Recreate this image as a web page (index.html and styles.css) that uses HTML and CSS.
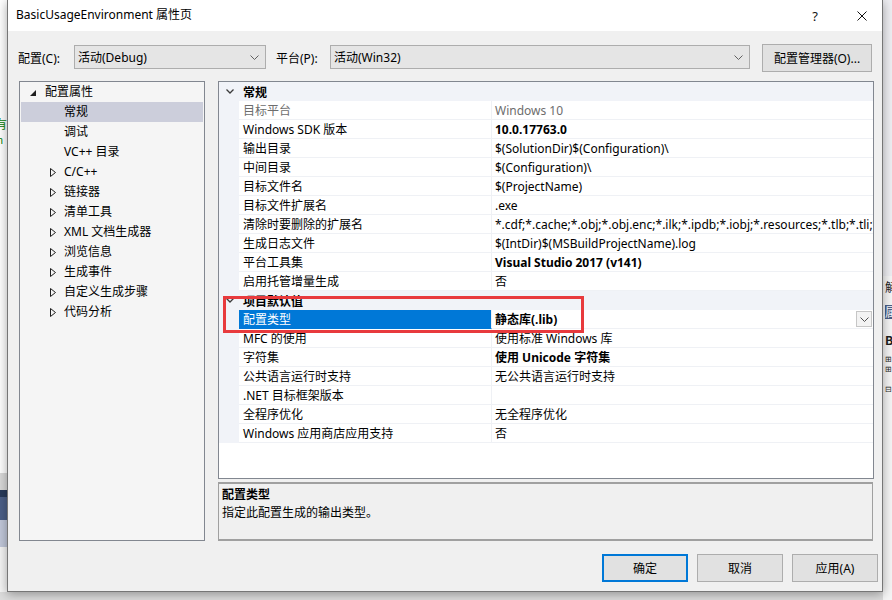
FILE: index.html
```html
<!DOCTYPE html>
<html lang="zh-CN">
<head>
<meta charset="utf-8">
<title>BasicUsageEnvironment 属性页</title>
<link rel="stylesheet" href="styles.css">
</head>
<body>
<div class="ide-left">
  <div class="ide-left-code">
    <span class="code-frag c1">有</span>
    <span class="code-frag c2">n</span>
  </div>
  <div class="ide-left-bars">
    <div class="bar b-gray"></div>
    <div class="bar b-navy"></div>
    <div class="bar b-blue"></div>
    <div class="bar b-light"></div>
  </div>
</div>
<div class="ide-right">
  <div class="ide-right-top"></div>
  <div class="ide-right-panel">
    <span class="rp rp1">解</span>
    <span class="rp rp2">属</span>
    <span class="rp rp3">B</span>
    <span class="rp rp4">⊞</span>
    <span class="rp rp5">⊞</span>
    <span class="rp rp6">⊟</span>
  </div>
</div>

<div class="dialog">
  <div class="titlebar">
    <span class="title">BasicUsageEnvironment 属性页</span>
    <span class="help">?</span>
    <svg class="close" width="10" height="10" viewBox="0 0 10 10"><path d="M0.5 0.5 L9.5 9.5 M9.5 0.5 L0.5 9.5" stroke="#111" stroke-width="1" fill="none"/></svg>
  </div>

  <div class="config-row">
    <span class="lbl lbl-config">配置(C):</span>
    <div class="combo combo-config">
      <span class="combo-text">活动(Debug)</span>
      <svg class="chev" width="9" height="5" viewBox="0 0 9 5"><path d="M0.5 0.5 L4.5 4.5 L8.5 0.5" stroke="#606060" stroke-width="1" fill="none"/></svg>
    </div>
    <span class="lbl lbl-platform">平台(P):</span>
    <div class="combo combo-platform">
      <span class="combo-text">活动(Win32)</span>
      <svg class="chev" width="9" height="5" viewBox="0 0 9 5"><path d="M0.5 0.5 L4.5 4.5 L8.5 0.5" stroke="#606060" stroke-width="1" fill="none"/></svg>
    </div>
    <button class="btn btn-mgr">配置管理器(O)...</button>
  </div>

  <div class="main">
    <div class="tree">
      <div class="tree-row root">
        <svg class="tri-open" width="6" height="6" viewBox="0 0 6 6"><polygon points="6,0 6,6 0,6" fill="#1e1e1e"/></svg>
        <span>配置属性</span>
      </div>
      <div class="tree-row child selected"><span>常规</span></div>
      <div class="tree-row child"><span>调试</span></div>
      <div class="tree-row child"><span>VC++ 目录</span></div>
      <div class="tree-row child exp"><svg class="tri" width="6" height="9" viewBox="0 0 6 9"><polygon points="0.5,0.5 5.5,4.5 0.5,8.5" fill="none" stroke="#1e1e1e" stroke-width="1"/></svg><span>C/C++</span></div>
      <div class="tree-row child exp"><svg class="tri" width="6" height="9" viewBox="0 0 6 9"><polygon points="0.5,0.5 5.5,4.5 0.5,8.5" fill="none" stroke="#1e1e1e" stroke-width="1"/></svg><span>链接器</span></div>
      <div class="tree-row child exp"><svg class="tri" width="6" height="9" viewBox="0 0 6 9"><polygon points="0.5,0.5 5.5,4.5 0.5,8.5" fill="none" stroke="#1e1e1e" stroke-width="1"/></svg><span>清单工具</span></div>
      <div class="tree-row child exp"><svg class="tri" width="6" height="9" viewBox="0 0 6 9"><polygon points="0.5,0.5 5.5,4.5 0.5,8.5" fill="none" stroke="#1e1e1e" stroke-width="1"/></svg><span>XML 文档生成器</span></div>
      <div class="tree-row child exp"><svg class="tri" width="6" height="9" viewBox="0 0 6 9"><polygon points="0.5,0.5 5.5,4.5 0.5,8.5" fill="none" stroke="#1e1e1e" stroke-width="1"/></svg><span>浏览信息</span></div>
      <div class="tree-row child exp"><svg class="tri" width="6" height="9" viewBox="0 0 6 9"><polygon points="0.5,0.5 5.5,4.5 0.5,8.5" fill="none" stroke="#1e1e1e" stroke-width="1"/></svg><span>生成事件</span></div>
      <div class="tree-row child exp"><svg class="tri" width="6" height="9" viewBox="0 0 6 9"><polygon points="0.5,0.5 5.5,4.5 0.5,8.5" fill="none" stroke="#1e1e1e" stroke-width="1"/></svg><span>自定义生成步骤</span></div>
      <div class="tree-row child exp"><svg class="tri" width="6" height="9" viewBox="0 0 6 9"><polygon points="0.5,0.5 5.5,4.5 0.5,8.5" fill="none" stroke="#1e1e1e" stroke-width="1"/></svg><span>代码分析</span></div>
    </div>

    <div class="right">
      <div class="grid">
        <div class="g-head">
          <div class="g-gut"><svg width="8" height="5" viewBox="0 0 8 5"><path d="M0.5 0.5 L4 4 L7.5 0.5" stroke="#3c3c3c" stroke-width="1.3" fill="none"/></svg></div>
          <span class="g-head-text">常规</span>
        </div>
        <div class="g-row"><div class="g-gut"></div><div class="g-name dim">目标平台</div><div class="g-val dim">Windows 10</div></div>
        <div class="g-row"><div class="g-gut"></div><div class="g-name">Windows SDK 版本</div><div class="g-val b">10.0.17763.0</div></div>
        <div class="g-row"><div class="g-gut"></div><div class="g-name">输出目录</div><div class="g-val">$(SolutionDir)$(Configuration)\</div></div>
        <div class="g-row"><div class="g-gut"></div><div class="g-name">中间目录</div><div class="g-val">$(Configuration)\</div></div>
        <div class="g-row"><div class="g-gut"></div><div class="g-name">目标文件名</div><div class="g-val">$(ProjectName)</div></div>
        <div class="g-row"><div class="g-gut"></div><div class="g-name">目标文件扩展名</div><div class="g-val">.exe</div></div>
        <div class="g-row"><div class="g-gut"></div><div class="g-name">清除时要删除的扩展名</div><div class="g-val">*.cdf;*.cache;*.obj;*.obj.enc;*.ilk;*.ipdb;*.iobj;*.resources;*.tlb;*.tli;*.tlh;*.tmp;*.rsp;*.pgc;*.pgd;*.meta;*.tlog;*.manifest;*.res;*.pch;*.exp;*.idb;*.rep;*.xdc;*.pdb;*_manifest.rc;*.bsc;*.sbr;*.xml;*.metagen;*.bi</div></div>
        <div class="g-row"><div class="g-gut"></div><div class="g-name">生成日志文件</div><div class="g-val">$(IntDir)$(MSBuildProjectName).log</div></div>
        <div class="g-row"><div class="g-gut"></div><div class="g-name">平台工具集</div><div class="g-val b">Visual Studio 2017 (v141)</div></div>
        <div class="g-row"><div class="g-gut"></div><div class="g-name">启用托管增量生成</div><div class="g-val">否</div></div>
        <div class="g-head">
          <div class="g-gut"><svg width="8" height="5" viewBox="0 0 8 5"><path d="M0.5 0.5 L4 4 L7.5 0.5" stroke="#3c3c3c" stroke-width="1.3" fill="none"/></svg></div>
          <span class="g-head-text">项目默认值</span>
        </div>
        <div class="g-row sel"><div class="g-gut"></div><div class="g-name">配置类型</div><div class="g-val b">静态库(.lib)<span class="dd"><svg width="9" height="5" viewBox="0 0 9 5"><path d="M0.5 0.5 L4.5 4.5 L8.5 0.5" stroke="#505050" stroke-width="1" fill="none"/></svg></span></div></div>
        <div class="g-row"><div class="g-gut"></div><div class="g-name">MFC 的使用</div><div class="g-val">使用标准 Windows 库</div></div>
        <div class="g-row"><div class="g-gut"></div><div class="g-name">字符集</div><div class="g-val b">使用 Unicode 字符集</div></div>
        <div class="g-row"><div class="g-gut"></div><div class="g-name">公共语言运行时支持</div><div class="g-val">无公共语言运行时支持</div></div>
        <div class="g-row"><div class="g-gut"></div><div class="g-name">.NET 目标框架版本</div><div class="g-val"></div></div>
        <div class="g-row"><div class="g-gut"></div><div class="g-name">全程序优化</div><div class="g-val">无全程序优化</div></div>
        <div class="g-row"><div class="g-gut"></div><div class="g-name">Windows 应用商店应用支持</div><div class="g-val">否</div></div>
      </div>
      <div class="desc">
        <div class="desc-title">配置类型</div>
        <div class="desc-text">指定此配置生成的输出类型。</div>
      </div>
    </div>
  </div>

  <div class="buttons">
    <button class="btn btn-ok">确定</button>
    <button class="btn">取消</button>
    <button class="btn">应用(A)</button>
  </div>

  <div class="highlight"></div>
</div>
</body>
</html>
```

FILE: styles.css
```css
* { box-sizing: border-box; }
html, body { margin: 0; padding: 0; }
body {
  width: 892px;
  height: 600px;
  overflow: hidden;
  position: relative;
  background: #dcdcdc;
  font-family: "Noto Sans", "Noto Sans CJK SC", sans-serif;
  font-size: 12px;
  color: #000;
}

/* background IDE fragments */
.ide-left {
  position: absolute;
  left: 0; top: 0;
  width: 7px; height: 592px;
  display: flex;
  flex-direction: column;
  background: #f5f5f5;
  overflow: hidden;
}
.ide-left-code { height: 473px; position: relative; background: #ffffff; }
.code-frag { position: absolute; color: #008000; font-family: "Noto Sans CJK SC", sans-serif; line-height: 12px; }
.c1 { left: -5px; top: 118px; font-size: 12px; }
.c2 { left: -3px; top: 135px; font-size: 10px; line-height: 10px; }
.ide-left-bars { display: flex; flex-direction: column; flex: 1; }
.bar { flex: none; }
.b-gray { height: 17px; background: #d9d9d9; }
.b-navy { height: 7px; background: #283a5b; }
.b-blue { height: 23px; background: #4b5f87; }
.b-light { height: 27px; background: #c1c8da; }

.ide-right {
  position: absolute;
  left: 883px; top: 0;
  width: 9px; height: 600px;
  display: flex;
  flex-direction: column;
  background: #eeeef2;
  overflow: hidden;
}
.ide-right-top { height: 276px; background: #eeeef2; }
.ide-right-panel { position: relative; flex: 1; background: #f5f5f5; }
.rp { position: absolute; left: 2px; font-size: 12px; line-height: 14px; color: #1e1e1e; font-family: "Noto Sans CJK SC", sans-serif; }
.rp1 { top: 4px; }
.rp2 { top: 29px; color: #ffffff; background: #4b5f87; width: 12px; }
.rp3 { top: 57px; font-weight: bold; }
.rp4 { top: 79px; font-size: 8px; line-height: 8px; }
.rp5 { top: 89px; font-size: 8px; line-height: 8px; }
.rp6 { top: 109px; font-size: 8px; line-height: 8px; }

/* dialog window */
.dialog {
  position: absolute;
  left: 7px; top: 0;
  width: 876px; height: 592px;
  border: 1px solid #767676;
  border-top: none;
  background: #f0f0f0;
  box-shadow: 0 2px 10px rgba(0, 0, 0, 0.35);
  display: flex;
  flex-direction: column;
}

.titlebar {
  height: 31px;
  background: #ffffff;
  display: flex;
  align-items: center;
  padding-left: 8px;
  flex: none;
}
.title { flex: 1; line-height: 16px; margin-top: -1px; }
.help { width: 20px; text-align: center; font-size: 13px; color: #111; }
.close { margin-left: 32px; margin-right: 15px; }

.config-row {
  margin-top: 13px;
  height: 28px;
  display: flex;
  align-items: center;
  padding-left: 10px;
  flex: none;
}
.lbl { white-space: nowrap; }
.lbl-config { width: 56px; }
.lbl-platform { width: 54px; margin-left: 10px; }
.combo {
  height: 24px;
  margin-top: -2px;
  background: #e5e5e5;
  border: 1px solid #adadad;
  display: flex;
  align-items: center;
  padding-left: 3px;
  padding-right: 6px;
}
.combo-text { flex: 1; }
.combo-config { width: 192px; }
.combo-platform { width: 420px; }
.btn {
  font: inherit;
  color: #000;
  background: #e1e1e1;
  border: 1px solid #adadad;
  height: 28px;
  padding: 0;
  margin: 0;
}
.btn-mgr { width: 110px; margin-left: 12px; }

.main {
  margin-top: 9px;
  padding-left: 11px;
  display: flex;
  flex: none;
  height: 460px;
}

.tree {
  width: 186px;
  height: 460px;
  border: 1px solid #828790;
  background: #f5f5f5;
  padding: 0 1px;
}
.tree-row {
  height: 20px;
  line-height: 18px;
  display: flex;
  align-items: center;
  white-space: nowrap;
}
.tree-row span { margin-top: -1px; }
.tree-row.root { padding-left: 9px; }
.tree-row.root span { margin-left: 9px; margin-top: 0; }
.tri-open { margin-top: 1px; }
.tree-row.child { padding-left: 43px; }
.tree-row.exp { padding-left: 29px; }
.tree-row.exp span { margin-left: 8px; }
.tree-row.selected { background: #cccedb; }

.right {
  margin-left: 13px;
  width: 656px;
  display: flex;
  flex-direction: column;
  gap: 3px;
}
.grid {
  height: 398px;
  border: 1px solid #828790;
  background: #ffffff;
  overflow: hidden;
}
.g-head {
  height: 19px;
  display: flex;
  align-items: center;
  background: #f1f3f8;
  font-weight: bold;
}
.g-gut {
  width: 20px;
  flex: none;
  align-self: stretch;
  display: flex;
  align-items: center;
  justify-content: center;
  padding-left: 2px;
  background: #f1f3f8;
}
.g-head-text { margin-left: 4px; }
.g-row {
  height: 19px;
  display: flex;
}
.g-name {
  width: 253px;
  flex: none;
  padding-left: 4px;
  padding-top: 1px;
  line-height: 17px;
  border-bottom: 1px solid #eff1f5;
  border-right: 1px solid #eff1f5;
  white-space: nowrap;
  overflow: hidden;
}
.g-val {
  flex: 1;
  min-width: 0;
  padding-left: 3px;
  padding-top: 1px;
  line-height: 17px;
  border-bottom: 1px solid #eff1f5;
  white-space: nowrap;
  overflow: hidden;
  position: relative;
}
.dim { color: #6d6d6d; }
.b { font-weight: bold; }
.g-row.sel .g-name { background: #0078d7; color: #ffffff; border-bottom-color: #0078d7; }
.dd {
  position: absolute;
  right: 1px; top: 1px;
  width: 16px; height: 16px;
  border: 1px solid #c6c6c6;
  background: #f3f3f3;
  display: flex;
  align-items: center;
  justify-content: center;
}

.desc {
  height: 59px;
  width: 655px;
  border: 2px solid #a0a0a0;
  border-width: 2px 1px 2px 1px;
  background: #f0f0f0;
  padding: 2px 0 0 3px;
}
.desc-title { font-weight: bold; line-height: 18px; }
.desc-text { line-height: 18px; }

.buttons {
  margin-top: 13px;
  display: flex;
  justify-content: flex-end;
  gap: 9px;
  padding-right: 4px;
  flex: none;
}
.buttons .btn { width: 86px; }
.btn-ok { border: 2px solid #0078d7; }

.highlight {
  position: absolute;
  left: 215px; top: 296px;
  width: 361px; height: 37px;
  border: 3px solid #e83a3d;
  pointer-events: none;
}
```
